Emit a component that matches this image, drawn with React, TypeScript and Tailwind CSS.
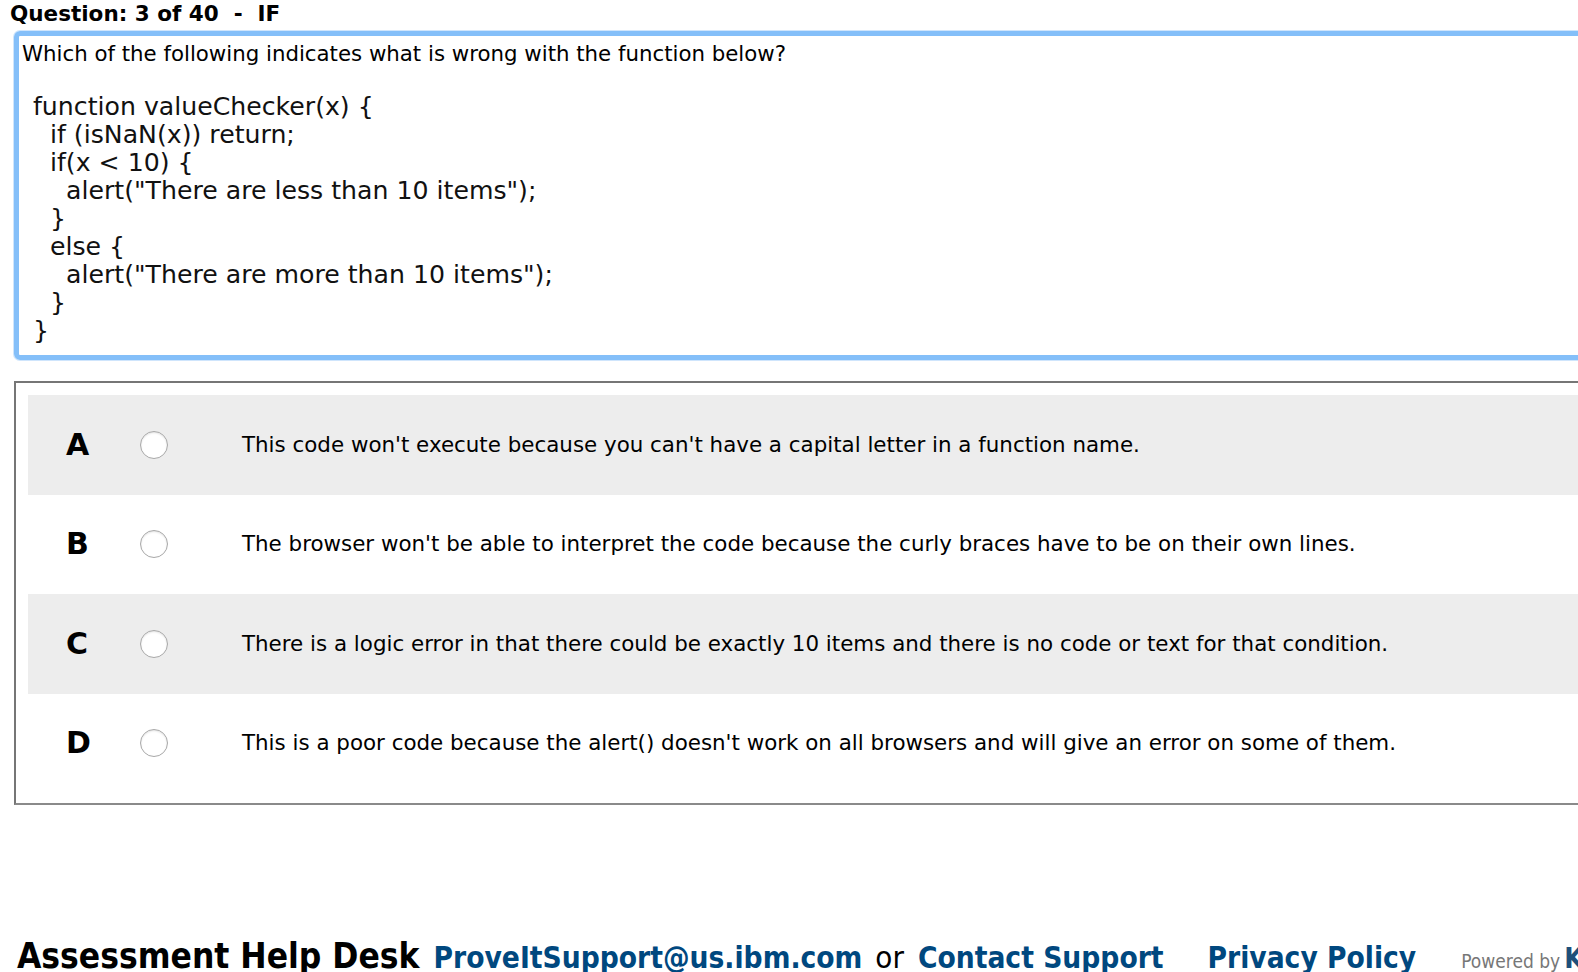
import React from 'react'

const options = [
  { key: 'A', text: "This code won't execute because you can't have a capital letter in a function name." },
  { key: 'B', text: "The browser won't be able to interpret the code because the curly braces have to be on their own lines." },
  { key: 'C', text: 'There is a logic error in that there could be exactly 10 items and there is no code or text for that condition.' },
  { key: 'D', text: "This is a poor code because the alert() doesn't work on all browsers and will give an error on some of them." },
]

const codeLines = [
  { indent: 0, text: 'function valueChecker(x) {' },
  { indent: 1, text: 'if (isNaN(x)) return;' },
  { indent: 1, text: 'if(x < 10) {' },
  { indent: 2, text: 'alert("There are less than 10 items");' },
  { indent: 1, text: '}' },
  { indent: 1, text: 'else {' },
  { indent: 2, text: 'alert("There are more than 10 items");' },
  { indent: 1, text: '}' },
  { indent: 0, text: '}' },
]

const indentClass = ['pl-0', 'pl-[17px]', 'pl-[33px]']

const App = () => {
  return (
    <div className="w-screen h-[972px] overflow-hidden bg-white text-black font-['DejaVu_Sans',sans-serif]">
      <div className="w-[1720px]">
        <h1 className="pl-[10px] pt-0 text-[21.5px] leading-[27px] font-bold">Question: 3 of 40&nbsp; -&nbsp; IF</h1>

        <div className="ml-[14px] mt-[4px] rounded-[6px] border-[5px] border-[#84bff9] shadow-[0_0_0_1px_#cfe5fc] pl-[3px] pt-[4px] pb-[10px]">
          <p className="text-[21.3px] leading-[28px]">Which of the following indicates what is wrong with the function below?</p>
          <div className="mt-[25px] pl-[11px] text-[25.2px] leading-[28px] text-[#111]">
            {codeLines.map((line, i) => (
              <div key={i} className={indentClass[line.indent]}>{line.text}</div>
            ))}
          </div>
        </div>

        <div className="ml-[14px] mt-[21px] border-2 border-[#767676] border-b-[#8a8a8a] pt-[12px] pb-[10px] pl-[12px]">
          {options.map((opt, i) => (
            <div
              key={opt.key}
              className={(i % 2 === 0 ? 'bg-[#ededed] ' : 'bg-white ') + 'h-[99.5px] flex items-center'}
            >
              <span className="w-[112px] pl-[38px] text-[30px] font-black leading-none">{opt.key}</span>
              <span className="w-[28px] h-[28px] rounded-full border border-[#a8a8a8] bg-white shadow-[inset_0_1px_2px_rgba(0,0,0,0.12)]" />
              <span className="ml-[74px] text-[21.4px] leading-[28px]">{opt.text}</span>
            </div>
          ))}
        </div>

        <div className="mt-[129px] pl-[17px] flex items-baseline whitespace-nowrap font-['DejaVu_Sans_Condensed','Liberation_Sans',sans-serif]">
          <span className="text-[35px] font-bold leading-[40px]">Assessment Help Desk</span>
          <a className="ml-[14px] text-[29.6px] font-bold text-[#00487f]">ProveItSupport@us.ibm.com</a>
          <span className="ml-[13px] text-[31px] text-black">or</span>
          <a className="ml-[14px] text-[29.6px] font-bold text-[#00487f]">Contact Support</a>
          <a className="ml-[44px] text-[29.6px] font-bold text-[#00487f]">Privacy Policy</a>
          <span className="ml-[45px] text-[19px] text-[#777]">Powered by</span>
          <span className="ml-[4px] text-[28px] font-bold text-[#1e4f7a]">K</span>
        </div>
      </div>
    </div>
  )
}

export default App
